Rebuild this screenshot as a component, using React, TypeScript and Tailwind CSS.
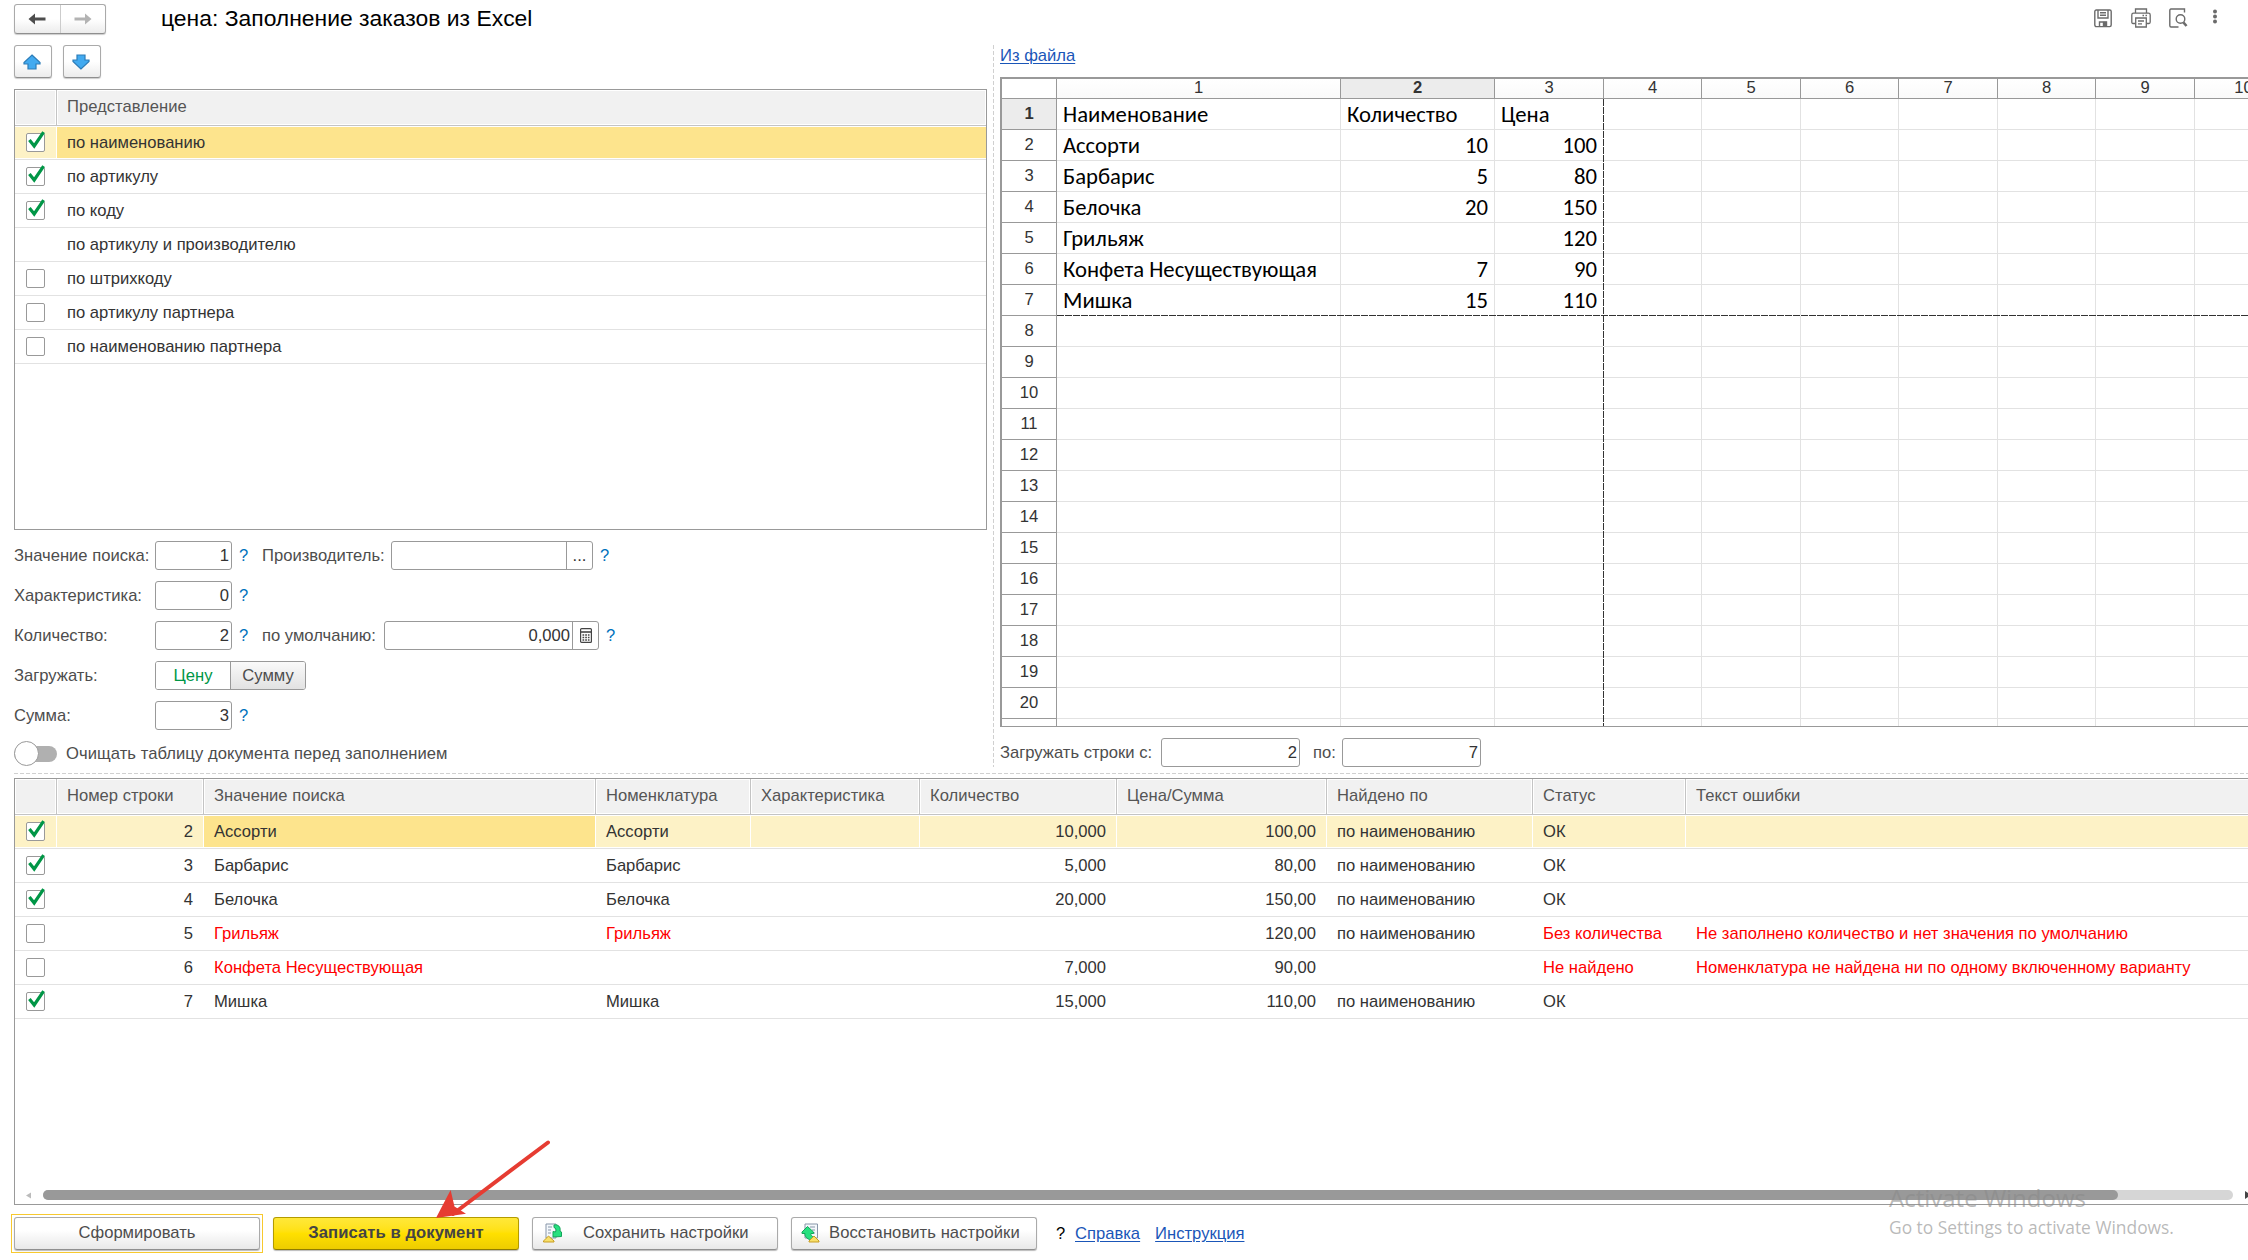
import React from 'react';

const searchOptions = [
  { label: 'по наименованию', state: 'on' },
  { label: 'по артикулу', state: 'on' },
  { label: 'по коду', state: 'on' },
  { label: 'по артикулу и производителю', state: 'none' },
  { label: 'по штрихкоду', state: 'off' },
  { label: 'по артикулу партнера', state: 'off' },
  { label: 'по наименованию партнера', state: 'off' },
];

const sheetColumns = ['w-[284px]', 'w-[154px]', 'w-[109px]', 'w-[98px]', 'w-[99px]', 'w-[98px]', 'w-[99px]', 'w-[98px]', 'w-[99px]', 'w-[98px]'];

const sheetData = [
  ['Наименование', 'Количество', 'Цена'],
  ['Ассорти', '10', '100'],
  ['Барбарис', '5', '80'],
  ['Белочка', '20', '150'],
  ['Грильяж', '', '120'],
  ['Конфета Несуществующая', '7', '90'],
  ['Мишка', '15', '110'],
];

const resultColumns = [
  { title: 'Номер строки', width: 'w-[147px]', right: true },
  { title: 'Значение поиска', width: 'w-[392px]' },
  { title: 'Номенклатура', width: 'w-[155px]' },
  { title: 'Характеристика', width: 'w-[169px]' },
  { title: 'Количество', width: 'w-[197px]', right: true },
  { title: 'Цена/Сумма', width: 'w-[210px]', right: true },
  { title: 'Найдено по', width: 'w-[206px]' },
  { title: 'Статус', width: 'w-[153px]' },
  { title: 'Текст ошибки', width: 'w-[600px]' },
];

const results = [
  { checked: true, cells: ['2', 'Ассорти', 'Ассорти', '', '10,000', '100,00', 'по наименованию', 'ОК', ''] },
  { checked: true, cells: ['3', 'Барбарис', 'Барбарис', '', '5,000', '80,00', 'по наименованию', 'ОК', ''] },
  { checked: true, cells: ['4', 'Белочка', 'Белочка', '', '20,000', '150,00', 'по наименованию', 'ОК', ''] },
  {
    checked: false,
    cells: ['5', 'Грильяж', 'Грильяж', '', '', '120,00', 'по наименованию', 'Без количества', 'Не заполнено количество и нет значения по умолчанию'],
  },
  {
    checked: false,
    cells: ['6', 'Конфета Несуществующая', '', '', '7,000', '90,00', '', 'Не найдено', 'Номенклатура не найдена ни по одному включенному варианту'],
  },
  { checked: true, cells: ['7', 'Мишка', 'Мишка', '', '15,000', '110,00', 'по наименованию', 'ОК', ''] },
];

// columns painted red when the row has an error
const errorColumns = [1, 2, 7, 8];

const CheckBox: React.FC<{ checked: boolean }> = ({ checked }) => (
  <span className="block w-[19px] h-[19px] shrink-0 border border-[#999] rounded-[2px] bg-white">
    {checked && (
      <svg width="19" height="19" viewBox="0 0 19 19" className="-mt-px -ml-px overflow-visible">
        <path d="M3.4 7 L8.2 13 L17.6 -0.8" fill="none" stroke="#009646" strokeWidth="3.2" />
      </svg>
    )}
  </span>
);

const Field: React.FC<{ value: string; className: string; children?: React.ReactNode }> = ({ value, className, children }) => (
  <div className={`h-[29px] flex shrink-0 border border-[#999] rounded-[3px] bg-white text-[#333] ${className}`}>
    <div className="flex-1 flex items-center justify-end pr-[2px]">{value}</div>
    {children && <div className="w-[26px] border-l border-[#999] flex items-center justify-center">{children}</div>}
  </div>
);

const Help = () => <span className="w-[10px] ml-[7px] text-[#0072bc] shrink-0">?</span>;

const FormRow: React.FC<{ label: string; children: React.ReactNode }> = ({ label, children }) => (
  <div className="h-[29px] flex items-center">
    <span className="w-[141px] shrink-0 whitespace-nowrap">{label}</span>
    {children}
  </div>
);

const ArrowButton: React.FC<{ down?: boolean }> = ({ down }) => (
  <button className="w-[38px] h-[33px] flex items-center justify-center rounded-[3px] border border-[#aaa] border-b-[#8f8f8f] bg-linear-to-b from-white from-50% to-[#ececec] shadow-[0_1px_1px_#ccc]">
    <svg width="18" height="16" viewBox="0 0 18 16" className={down ? 'rotate-180 mr-[2px]' : 'mr-[2px]'}>
      <path d="M9 1 L17 8.5 V10 H13 V15 H5 V10 H1 V8.5 Z" fill="#42aaf0" stroke="#2c7cb8" strokeWidth="1.2" />
    </svg>
  </button>
);

const CalculatorIcon = () => (
  <svg width="12" height="15" viewBox="0 0 12 15">
    <rect x="0.6" y="0.6" width="10.8" height="13.8" rx="1" fill="none" stroke="#444" strokeWidth="1.2" />
    <path d="M1 4 H11" stroke="#444" strokeWidth="1.6" />
    <path d="M2.5 7 H9.5 M2.5 9.5 H9.5 M2.5 12 H9.5" stroke="#444" strokeWidth="1.5" strokeDasharray="1.7 1" />
  </svg>
);

const SettingsIcon: React.FC<{ restore?: boolean }> = ({ restore }) => (
  <svg width="19" height="20" viewBox="0 0 19 20" className="shrink-0">
    {restore ? (
      <>
        <path d="M4 1 H16.500 V15 H4 Z" fill="#f4f8fc" stroke="#8795a8" />
        <path d="M9 4 H14 M11 7 H14 M11 10 H14" stroke="#8795a8" />
        <path d="M6.500 3.500 L12.500 9 V10.500 H10 C9.500 12 10.500 13 12.500 14 L10 17 C6 16 3.500 13.500 4 10.500 H1 V9 Z" fill="#26e07f" stroke="#14a45a" />
        <path d="M13 13 L18 18 V19 H8 V18 Z" fill="#f8e069" stroke="#c79d24" />
      </>
    ) : (
      <>
        <path d="M3 1 H13 V15 H3 Z" fill="#f4f8fc" stroke="#8795a8" />
        <path d="M5 4 H9 M5 7 H8 M5 10 H8" stroke="#8795a8" />
        <path d="M11 2 C15 1 18 4 17 8 L18.500 9 V13.500 L10 14 V8.500 L12.500 9 C13.500 7 13 5 11 4.500 Z" fill="#26e07f" stroke="#14a45a" />
        <path d="M5.500 13 L11 18 V19 H0.500 V18 Z" fill="#f8e069" stroke="#c79d24" />
      </>
    )}
  </svg>
);

const HeaderIcons = () => (
  <div className="flex items-center text-[#6b6b6b] pr-[30px]">
    <svg width="18" height="19" viewBox="0 0 18 19" fill="none" stroke="currentColor" strokeWidth="1.4">
      <rect x="0.8" y="1" width="16.400" height="16.600" rx="1.500" />
      <path d="M4 1 V9 H14 V1 M6 3.800 H12 M6 6.300 H12" />
      <path d="M5.500 17.500 V13 H12.500 V17.500" />
      <path d="M9.500 13.500 H12 V17 H9.500 Z" fill="currentColor" />
    </svg>
    <svg width="20" height="20" viewBox="0 0 20 20" fill="none" stroke="currentColor" strokeWidth="1.3" className="ml-[19px]">
      <path d="M4.500 5 V1 H15.500 V5" />
      <path d="M4.500 15.500 H2 Q0.800 15.500 0.800 14 V7 Q0.800 5.200 2.500 5.200 H17.500 Q19.200 5.200 19.200 7 V14 Q19.200 15.500 18 15.500 H15.500" />
      <path d="M4.700 10 H15.300 V19 H4.700 Z M7 13 H13 M7 15.800 H11" />
      <path d="M11.500 7.500 H13 M14.500 7.500 H16" />
    </svg>
    <svg width="19" height="20" viewBox="0 0 19 20" fill="none" stroke="currentColor" strokeWidth="1.4" className="ml-[18px]">
      <path d="M15.500 4.500 V1 H2 Q0.800 1 0.800 2.500 V17.500 Q0.800 19 2 19 H9.500" />
      <circle cx="11.500" cy="11" r="4.300" />
      <path d="M14.500 14.500 L17.500 18" strokeWidth="2.600" />
    </svg>
    <svg width="6" height="16" viewBox="0 0 6 16" fill="currentColor" className="ml-[24px] -mt-[2px]">
      <circle cx="3" cy="2.500" r="2" />
      <circle cx="3" cy="7.500" r="2" />
      <circle cx="3" cy="12.500" r="2" />
    </svg>
  </div>
);

const OptionsTable = () => (
  <div className="mt-[11px] w-[973px] h-[441px] border border-[#999] overflow-hidden">
    <div className="h-9 flex border-b border-[#c4c4c4] text-[#555]">
      <div className="w-[42px] border-r border-[#c4c4c4] p-px">
        <div className="h-full bg-[#f1f1f1]" />
      </div>
      <div className="flex-1 p-px">
        <div className="h-full bg-[#f1f1f1] flex items-center pl-[9px] pb-[2px]">Представление</div>
      </div>
    </div>
    {searchOptions.map((option, i) => (
      <div key={option.label} className="h-[34px] flex border-b border-[#e2e2e2] text-[#333]">
        <div className={`w-[42px] my-px flex items-center pl-[11px] border-r border-white ${i === 0 ? 'bg-[#fdf2c6]' : ''}`}>
          {option.state !== 'none' && <CheckBox checked={option.state === 'on'} />}
        </div>
        <div className={`flex-1 my-px flex items-center pl-[10px] ${i === 0 ? 'bg-[#fde48d]' : ''}`}>{option.label}</div>
      </div>
    ))}
  </div>
);

const SearchForm = () => (
  <div className="mt-[11px] flex flex-col gap-[11px] text-[#4d4d4d]">
    <FormRow label="Значение поиска:">
      <Field value="1" className="w-[77px]" />
      <Help />
      <span className="ml-[13px] w-[129px] whitespace-nowrap">Производитель:</span>
      <Field value="" className="w-[202px]">...</Field>
      <Help />
    </FormRow>
    <FormRow label="Характеристика:">
      <Field value="0" className="w-[77px]" />
      <Help />
    </FormRow>
    <FormRow label="Количество:">
      <Field value="2" className="w-[77px]" />
      <Help />
      <span className="ml-[13px] w-[122px] whitespace-nowrap">по умолчанию:</span>
      <Field value="0,000" className="w-[215px]">
        <CalculatorIcon />
      </Field>
      <Help />
    </FormRow>
    <FormRow label="Загружать:">
      <div className="h-[29px] w-[151px] flex border border-[#999] rounded-[3px] overflow-hidden">
        <button className="w-[74px] bg-white text-[#009646]">Цену</button>
        <button className="flex-1 border-l border-[#999] bg-linear-to-b from-[#fafafa] to-[#e2e2e2]">Сумму</button>
      </div>
    </FormRow>
    <FormRow label="Сумма:">
      <Field value="3" className="w-[77px]" />
      <Help />
    </FormRow>
    <div className="h-[25px] flex items-center">
      <div className="w-[43px] h-[16px] rounded-full bg-[#b0b0b0] flex items-center">
        <span className="w-[25px] h-[25px] shrink-0 rounded-full bg-white border border-[#999]" />
      </div>
      <span className="ml-[9px] pt-px tracking-[0.06px]">Очищать таблицу документа перед заполнением</span>
    </div>
  </div>
);

const Sheet = () => (
  <div className="relative h-[650px] border-t-2 border-l-2 border-b border-[#999] overflow-hidden">
    <div className="flex h-5 border-b border-[#999] text-[#333]">
      <div className="w-[55px] shrink-0 border-r border-[#999]" />
      {sheetColumns.map((width, i) => (
        <div
          key={i}
          className={`${width} shrink-0 border-r border-[#999] flex items-center justify-center pb-px ${i === 1 ? 'bg-[#ececec] font-bold' : 'bg-linear-to-b from-white to-[#fafafa]'}`}
        >
          {i + 1}
        </div>
      ))}
    </div>
    {Array.from({ length: 21 }, (_, row) => (
      <div key={row} className="flex h-[31px]">
        <div
          className={`w-[55px] shrink-0 border-r border-b border-[#999] flex items-center justify-center pb-px text-[#333] ${row === 0 ? 'bg-[#ececec] font-bold' : ''}`}
        >
          {row < 20 ? row + 1 : ''}
        </div>
        {sheetColumns.map((width, col) => (
          <div
            key={col}
            className={`${width} shrink-0 border-r border-b border-[#e2e2e2] px-[6px] pb-px flex items-center whitespace-nowrap font-[Carlito,Lato,'Open_Sans',sans-serif] text-[22.7px] text-black ${row > 0 && col > 0 ? 'justify-end' : ''}`}
          >
            {sheetData[row]?.[col]}
          </div>
        ))}
      </div>
    ))}
    {/* print area borders */}
    <div className="absolute top-5 bottom-0 left-[601px] w-px bg-[repeating-linear-gradient(to_bottom,#333_0_7px,#fff_7px_8px)]" />
    <div className="absolute top-[236px] right-0 left-[55px] h-px bg-[repeating-linear-gradient(to_right,#333_0_7px,#fff_7px_8px)]" />
  </div>
);

const ResultsTable = () => (
  <div className="ml-[14px] mt-1 h-[427px] flex flex-col border border-r-0 border-[#999] overflow-hidden">
    <div className="h-9 shrink-0 flex border-b border-[#c4c4c4] text-[#555]">
      <div className="w-[42px] shrink-0 border-r border-[#c4c4c4] p-px">
        <div className="h-full bg-[#f1f1f1]" />
      </div>
      {resultColumns.map(column => (
        <div key={column.title} className={`${column.width} shrink-0 border-r border-[#c4c4c4] p-px`}>
          <div className="h-full bg-[#f1f1f1] flex items-center pl-[9px] pb-[2px]">{column.title}</div>
        </div>
      ))}
    </div>
    {results.map((row, i) => (
      <div key={i} className="h-[34px] shrink-0 flex border-b border-[#e2e2e2] text-[#333]">
        <div className={`w-[42px] shrink-0 my-px flex items-center pl-[11px] border-r border-white ${i === 0 ? 'bg-[#fdf2c6]' : ''}`}>
          <CheckBox checked={row.checked} />
        </div>
        {row.cells.map((cell, col) => (
          <div
            key={col}
            className={`${resultColumns[col].width} shrink-0 my-px px-[10px] flex items-center whitespace-nowrap border-r border-white ${
              resultColumns[col].right ? 'justify-end' : ''
            } ${i === 0 ? (col === 1 ? 'bg-[#fde48d]' : 'bg-[#fdf2c6]') : ''} ${
              !row.checked && errorColumns.includes(col) ? 'text-[#ff0000]' : ''
            }`}
          >
            {cell}
          </div>
        ))}
      </div>
    ))}
    <div className="mt-auto mb-1 h-[10px] flex shrink-0 items-center pl-[11px]">
      <svg width="5" height="7" viewBox="0 0 5 7" className="shrink-0">
        <path d="M5 0.500 V6.500 L0 3.500 Z" fill="#bbb" />
      </svg>
      <div className="ml-3 w-[2190px] h-[10px] shrink-0 rounded-full bg-[#d6d6d6]">
        <div className="w-[2075px] h-full rounded-full bg-[#999]" />
      </div>
      <svg width="6" height="8" viewBox="0 0 6 8" className="ml-3 shrink-0">
        <path d="M0 0 V8 L6 4 Z" fill="#444" />
      </svg>
    </div>
  </div>
);

const footerButton = 'h-[33px] rounded-[3px] border border-[#aaa] border-b-[#8f8f8f] bg-linear-to-b from-white from-40% to-[#e8e8e8] shadow-[0_1px_1px_#bbb] text-[#4d4d4d]';

const Footer = () => (
  <div className="mt-2 flex h-10 items-center pl-[11px]">
    <div className="border border-[#f7c92f] p-[2px]">
      <button className={`w-[246px] ${footerButton}`}>Сформировать</button>
    </div>
    <button className="ml-[10px] w-[246px] h-[33px] rounded-[3px] border border-[#b39b00] border-b-[#8f7c00] bg-linear-to-b from-[#ffe838] via-[#ffe000] to-[#edcd00] shadow-[0_1px_1px_#bbb] text-[#444] font-bold tracking-[0.08px]">
      Записать в документ
    </button>
    <button className={`ml-[13px] w-[246px] flex items-center pl-[10px] ${footerButton}`}>
      <SettingsIcon />
      <span className="ml-[21px] whitespace-nowrap">Сохранить настройки</span>
    </button>
    <button className={`ml-[13px] w-[246px] flex items-center pl-[9px] ${footerButton}`}>
      <SettingsIcon restore />
      <span className="ml-[9px] whitespace-nowrap tracking-[0.06px]">Восстановить настройки</span>
    </button>
    <span className="ml-[19px] mt-[2px] w-[19px] text-black">?</span>
    <a className="mt-[2px] text-[#1a56b8] underline underline-offset-2">Справка</a>
    <a className="ml-[15px] mt-[2px] text-[#1a56b8] underline underline-offset-2">Инструкция</a>
  </div>
);

export default function App() {
  return (
    <div className="relative w-[2248px] h-[1260px] overflow-hidden bg-white font-['Liberation_Sans',Arial,sans-serif] text-[16.6px] leading-[20px]">
      <div className="h-[45px] flex items-start justify-between pt-1">
        <div className="flex items-center pl-[14px]">
          <div className="w-[92px] h-[30px] flex rounded-[3px] border border-[#aaa] border-b-[#8f8f8f] bg-linear-to-b from-white from-50% to-[#ececec] shadow-[0_1px_1px_#ccc]">
            <button className="flex-1 flex items-center justify-center border-r border-[#ccc]">
              <svg width="18" height="12" viewBox="0 0 18 12">
                <path d="M0.500 6 L7 0.500 V4.500 H17.500 V7.500 H7 V11.500 Z" fill="#4d4d4d" />
              </svg>
            </button>
            <button className="flex-1 flex items-center justify-center">
              <svg width="18" height="12" viewBox="0 0 18 12">
                <path d="M17.500 6 L11 0.500 V4.500 H0.500 V7.500 H11 V11.500 Z" fill="#b3b3b3" />
              </svg>
            </button>
          </div>
          <h1 className="ml-[55px] pb-[2px] text-[22.900px] text-black whitespace-nowrap">цена: Заполнение заказов из Excel</h1>
        </div>
        <div className="pt-1">
          <HeaderIcons />
        </div>
      </div>

      <div className="flex h-[722px]">
        <div className="w-[993px] shrink-0 pl-[14px]">
          <div className="flex gap-[11px]">
            <ArrowButton />
            <ArrowButton down />
          </div>
          <OptionsTable />
          <SearchForm />
        </div>
        <div className="w-px bg-[repeating-linear-gradient(to_bottom,#d0d0d0_0_4px,#fff_4px_6px)]" />
        <div className="flex-1 min-w-0 pl-[6px]">
          <div className="h-8 pt-px">
            <a className="text-[#1a56b8] underline underline-offset-2">Из файла</a>
          </div>
          <Sheet />
          <div className="mt-[11px] flex items-center text-[#4d4d4d]">
            <span className="w-[161px] whitespace-nowrap">Загружать строки с:</span>
            <Field value="2" className="w-[139px]" />
            <span className="ml-[13px] w-[29px]">по:</span>
            <Field value="7" className="w-[139px]" />
          </div>
        </div>
      </div>

      <div className="ml-[14px] mt-[6px] h-px bg-[repeating-linear-gradient(to_right,#d0d0d0_0_4px,#fff_4px_6px)]" />
      <ResultsTable />
      <Footer />

      {/* pointer to the save button */}
      <svg width="120" height="84" viewBox="0 0 120 84" className="absolute left-[433px] top-[1138px]">
        <path d="M115 4.500 L20 76" stroke="#e63c32" strokeWidth="4" strokeLinecap="round" />
        <path d="M3 80 L17.600 52 L21.500 68.500 L33 75.700 Z" fill="#e63c32" />
      </svg>

      <div className="absolute left-[1889px] top-[1182px] font-['Open_Sans','Noto_Sans',sans-serif] text-[#8a8a8a]/60 whitespace-nowrap">
        <div className="text-[24px] leading-[32px]">Activate Windows</div>
        <div className="text-[17.400px] leading-[26px]">Go to Settings to activate Windows.</div>
      </div>
    </div>
  );
}
